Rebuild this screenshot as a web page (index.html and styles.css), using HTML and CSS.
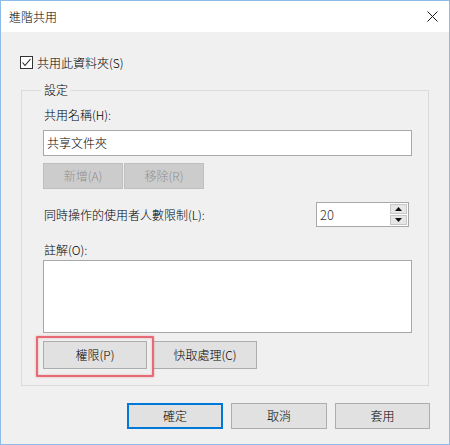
FILE: index.html
```html
<!DOCTYPE html>
<html lang="zh-Hant">
<head>
<meta charset="utf-8">
<title>進階共用</title>
<link rel="stylesheet" href="styles.css">
</head>
<body>
<div class="window">
  <div class="titlebar">
    <span class="title">進階共用</span>
    <svg class="close" width="11" height="11" viewBox="0 0 11 11"><path d="M0.5 0.5 L10.5 10.5 M10.5 0.5 L0.5 10.5" stroke="#1a1a1a" stroke-width="1" fill="none"/></svg>
  </div>
  <div class="content">
    <div class="check-row">
      <span class="checkbox"><svg width="11" height="11" viewBox="0 0 11 11"><path d="M1.5 5.5 L4 8.5 L9.5 2" stroke="#222" stroke-width="1.1" fill="none"/></svg></span>
      <span>共用此資料夾(S)</span>
    </div>
    <fieldset class="group">
      <legend>設定</legend>
      <div class="label first">共用名稱(H):</div>
      <div class="textbox">共享文件夾</div>
      <div class="btn-pair">
        <div class="btn disabled w80">新增(A)</div>
        <div class="btn disabled w80">移除(R)</div>
      </div>
      <div class="limit-row">
        <span>同時操作的使用者人數限制(L):</span>
        <div class="spinbox">
          <span class="spin-value">20</span>
          <div class="spin-buttons">
            <div class="spin-btn"><svg width="7" height="4" viewBox="0 0 7 4"><path d="M0 4 L3.5 0 L7 4 Z" fill="#111"/></svg></div>
            <div class="spin-btn"><svg width="7" height="4" viewBox="0 0 7 4"><path d="M0 0 L3.5 4 L7 0 Z" fill="#111"/></svg></div>
          </div>
        </div>
      </div>
      <div class="label comment-label">註解(O):</div>
      <div class="textarea"></div>
      <div class="action-row">
        <div class="highlight-wrap">
          <div class="btn w104">權限(P)</div>
          <div class="highlight"></div>
        </div>
        <div class="btn w104">快取處理(C)</div>
      </div>
    </fieldset>
    <div class="dialog-buttons">
      <div class="btn dlg default">確定</div>
      <div class="btn dlg">取消</div>
      <div class="btn dlg last">套用</div>
    </div>
  </div>
</div>
</body>
</html>
```
FILE: styles.css
```css
html, body {
  margin: 0;
  padding: 0;
  background: #ffffff;
}

body {
  font-family: "Noto Sans CJK TC", "Noto Sans", sans-serif;
  font-size: 12px;
  font-weight: 300;
  line-height: 16px;
  color: #000;
}

.window {
  width: 450px;
  height: 445px;
  box-sizing: border-box;
  border: 1px solid #8fbbe8;
  background: #f0f0f0;
  display: flex;
  flex-direction: column;
}

.titlebar {
  height: 31px;
  flex: none;
  background: #ffffff;
  display: flex;
  align-items: center;
  justify-content: space-between;
  padding: 0 11px 0 8px;
}

.title {
  color: #000;
}

.close {
  display: block;
}

.content {
  flex: 1;
  display: flex;
  flex-direction: column;
}

.check-row {
  margin-top: 24px;
  padding-left: 19px;
  display: flex;
  align-items: center;
  gap: 4px;
  height: 13px;
}

.checkbox {
  width: 13px;
  height: 13px;
  box-sizing: border-box;
  border: 1px solid #333;
  background: #fff;
  display: flex;
  align-items: center;
  justify-content: center;
}

.checkbox svg {
  display: block;
}

.group {
  margin: 13px 0 0 20px;
  width: 408px;
  box-sizing: border-box;
  border: 1px solid #dadada;
  padding: 9px 16px 16px 21px;
  min-width: 0;
}

.group legend {
  padding: 0 3px;
  margin-left: -2px;
  line-height: 16px;
}

.label {
  line-height: 16px;
  padding-left: 1px;
}

.textbox {
  margin-top: 7px;
  height: 26px;
  box-sizing: border-box;
  border: 1px solid #a8a8a8;
  background: #fff;
  padding-left: 3px;
  display: flex;
  align-items: center;
}

.btn-pair {
  margin-top: 7px;
  display: flex;
  gap: 1px;
}

.btn {
  box-sizing: border-box;
  border: 1px solid #adadad;
  background: #e1e1e1;
  display: flex;
  align-items: center;
  justify-content: center;
  color: #000;
}

.btn.disabled {
  background: #cccccc;
  border-color: #bfbfbf;
  color: #8f8f8f;
}

.w80 {
  width: 80px;
  height: 26px;
}

.limit-row {
  margin-top: 13px;
  display: flex;
  align-items: center;
  justify-content: space-between;
  padding-left: 1px;
}

.spinbox {
  width: 93px;
  height: 25px;
  margin-right: 3px;
  box-sizing: border-box;
  border: 1px solid #a8a8a8;
  background: #fff;
  display: flex;
  align-items: center;
  justify-content: space-between;
  padding: 0 1px 0 3px;
}

.spin-value {
  color: #333;
  font-size: 13px;
}

.spin-buttons {
  display: flex;
  flex-direction: column;
  gap: 1px;
}

.spin-btn {
  width: 17px;
  height: 10px;
  box-sizing: border-box;
  border: 1px solid #c8c8c8;
  background: #e6e6e6;
  display: flex;
  align-items: center;
  justify-content: center;
}

.spin-btn svg {
  display: block;
}

.comment-label {
  margin-top: 15px;
}

.textarea {
  margin-top: 2px;
  height: 73px;
  box-sizing: border-box;
  border: 1px solid #a8a8a8;
  background: #fff;
}

.action-row {
  margin-top: 8px;
  display: flex;
  gap: 6px;
}

.w104 {
  width: 104px;
  height: 28px;
}

.highlight-wrap {
  position: relative;
}

.highlight {
  position: absolute;
  left: -7px;
  top: -5px;
  right: -7px;
  bottom: -8px;
  border: 2px solid #e66b74;
  border-radius: 1px;
  box-shadow: 0 0 2px rgba(229, 96, 106, 0.6), inset 0 0 2px rgba(229, 96, 106, 0.5);
  pointer-events: none;
}

.dialog-buttons {
  margin-top: 17px;
  padding-right: 19px;
  display: flex;
  justify-content: flex-end;
  gap: 8px;
}

.dlg {
  width: 96px;
  height: 26px;
}

.dlg.last {
  width: 95px;
}

.dlg.default {
  border: 2px solid #0078d7;
}
```
